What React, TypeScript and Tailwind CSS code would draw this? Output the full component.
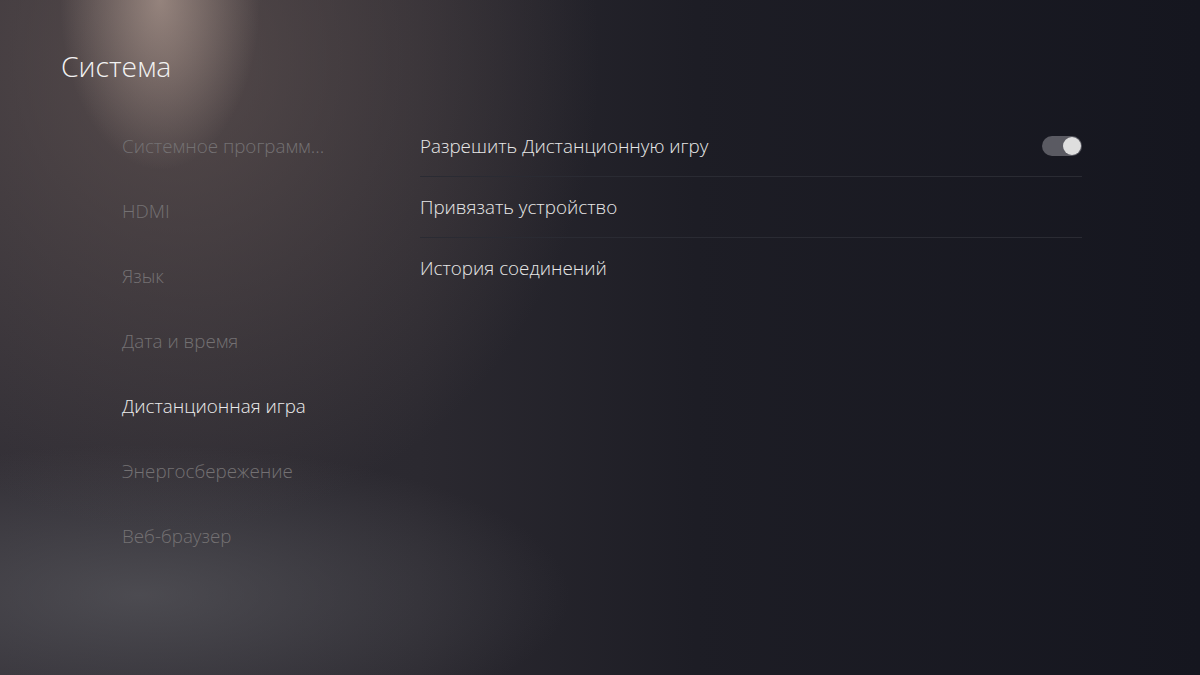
const sideItems = [
  { label: "Системное программ...", active: false },
  { label: "HDMI", active: false },
  { label: "Язык", active: false },
  { label: "Дата и время", active: false },
  { label: "Дистанционная игра", active: true },
  { label: "Энергосбережение", active: false },
  { label: "Веб-браузер", active: false },
];

const options = [
  { label: "Разрешить Дистанционную игру", toggle: true },
  { label: "Привязать устройство", toggle: false },
  { label: "История соединений", toggle: false },
];

function Toggle() {
  return (
    <div className="w-[40px] h-[20px] rounded-full bg-[#5a5a62] flex items-center justify-end pr-[1px]">
      <div className="w-[18px] h-[18px] rounded-full bg-[#dedede]" />
    </div>
  );
}

export default function App() {
  return (
    <div className="w-[1200px] h-[675px] overflow-hidden font-['Open_Sans',sans-serif] bg-[#15161f] bg-[image:radial-gradient(ellipse_100px_170px_at_160px_0px,rgba(195,172,160,0.6),transparent),radial-gradient(ellipse_430px_470px_at_170px_60px,rgba(100,86,84,0.7),transparent),radial-gradient(ellipse_430px_150px_at_140px_595px,rgba(95,95,100,0.6),transparent),linear-gradient(to_right,#322f36_0%,#2b2930_35%,#1d1d25_58%,#15161f_100%)] flex flex-col">
      <h1 className="pl-[61px] pt-[48px] h-[114px] text-[28.3px] leading-[36px] font-light text-[#f2f2f2]">
        Система
      </h1>
      <div className="flex">
        <ul className="w-[420px] pl-[122px] flex flex-col">
          {sideItems.map((item) => (
            <li
              key={item.label}
              className={
                item.active
                  ? "h-[65px] flex items-center text-[18.8px] font-light text-[#ececec]"
                  : "h-[65px] flex items-center text-[18.8px] font-light text-[#747173]"
              }
            >
              {item.label}
            </li>
          ))}
        </ul>
        <div className="w-[662px] mt-[2px] flex flex-col">
          {options.map((opt, i) => (
            <div
              key={opt.label}
              className={
                i < options.length - 1
                  ? "h-[61px] flex items-center justify-between border-b border-[#2a2b33]"
                  : "h-[61px] flex items-center justify-between"
              }
            >
              <span className="text-[18.8px] font-light text-[#e8e8e8]">{opt.label}</span>
              {opt.toggle && <Toggle />}
            </div>
          ))}
        </div>
      </div>
    </div>
  );
}
